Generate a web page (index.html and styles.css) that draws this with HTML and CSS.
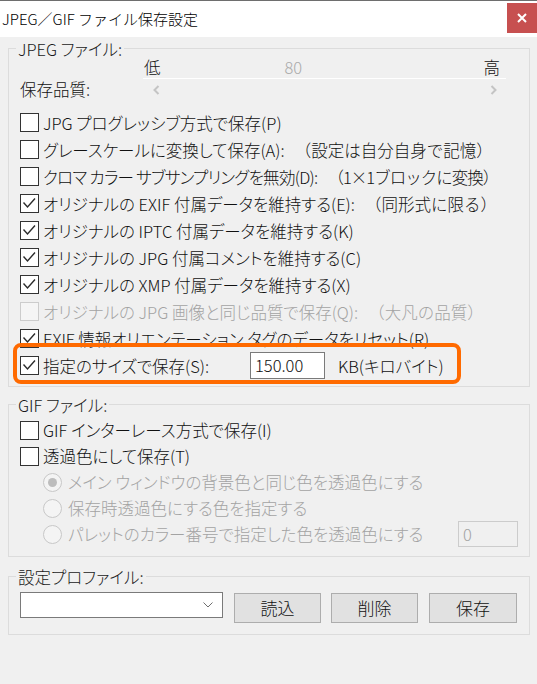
FILE: index.html
```html
<!DOCTYPE html>
<html lang="ja">
<head>
<meta charset="utf-8">
<title>JPEG／GIF ファイル保存設定</title>
<link rel="stylesheet" href="styles.css">
</head>
<body>
<div class="titlebar">
  <div class="title">JPEG／GIF ファイル保存設定</div>
  <div class="close">
    <svg width="10" height="10" viewBox="0 0 10 10"><path d="M1 1L9 9M9 1L1 9" stroke="#fff" stroke-width="2"/></svg>
  </div>
</div>
<div class="content">
  <section class="group g-jpeg">
    <div class="legend">JPEG ファイル:</div>
    <div class="quality">
      <div class="q-label">保存品質:</div>
      <div class="q-slider">
        <div class="ticks"><span class="lo">低</span><span class="val">80</span><span class="hi">高</span></div>
        <div class="track">
          <svg width="7" height="10" viewBox="0 0 7 10"><path d="M5.5 1L1.5 5L5.5 9" stroke="#c4c4c4" stroke-width="2" fill="none"/></svg>
          <svg width="7" height="10" viewBox="0 0 7 10"><path d="M1.5 1L5.5 5L1.5 9" stroke="#c4c4c4" stroke-width="2" fill="none"/></svg>
        </div>
      </div>
    </div>
    <div class="rows">
      <div class="row"><span class="cb"></span><span class="lbl">JPG プログレッシブ方式で保存(P)</span></div>
      <div class="row"><span class="cb"></span><span class="lbl">グレースケールに変換して保存(A):</span><span class="note">（設定は自分自身で記憶）</span></div>
      <div class="row"><span class="cb"></span><span class="lbl narrow">クロマ カラー サブサンプリングを無効(D):</span><span class="note narrow-note">（1×1ブロックに変換）</span></div>
      <div class="row"><span class="cb on"><svg width="17" height="17" viewBox="0 0 17 17"><polyline points="2.5,7.5 6.5,12 14,3.5" fill="none" stroke="#2b2b2b" stroke-width="1.4"/></svg></span><span class="lbl">オリジナルの EXIF 付属データを維持する(E):</span><span class="note">（同形式に限る）</span></div>
      <div class="row"><span class="cb on"><svg width="17" height="17" viewBox="0 0 17 17"><polyline points="2.5,7.5 6.5,12 14,3.5" fill="none" stroke="#2b2b2b" stroke-width="1.4"/></svg></span><span class="lbl">オリジナルの IPTC 付属データを維持する(K)</span></div>
      <div class="row"><span class="cb on"><svg width="17" height="17" viewBox="0 0 17 17"><polyline points="2.5,7.5 6.5,12 14,3.5" fill="none" stroke="#2b2b2b" stroke-width="1.4"/></svg></span><span class="lbl">オリジナルの JPG 付属コメントを維持する(C)</span></div>
      <div class="row"><span class="cb on"><svg width="17" height="17" viewBox="0 0 17 17"><polyline points="2.5,7.5 6.5,12 14,3.5" fill="none" stroke="#2b2b2b" stroke-width="1.4"/></svg></span><span class="lbl">オリジナルの XMP 付属データを維持する(X)</span></div>
      <div class="row disabled"><span class="cb"></span><span class="lbl">オリジナルの JPG 画像と同じ品質で保存(Q):</span><span class="note">（大凡の品質）</span></div>
      <div class="row"><span class="cb on"><svg width="17" height="17" viewBox="0 0 17 17"><polyline points="2.5,7.5 6.5,12 14,3.5" fill="none" stroke="#2b2b2b" stroke-width="1.4"/></svg></span><span class="lbl">EXIF 情報オリエンテーション タグのデータをリセット(R)</span></div>
      <div class="row row-size"><span class="cb on"><svg width="17" height="17" viewBox="0 0 17 17"><polyline points="2.5,7.5 6.5,12 14,3.5" fill="none" stroke="#2b2b2b" stroke-width="1.4"/></svg></span><span class="lbl size-lbl">指定のサイズで保存(S):</span><span class="num">150.00</span><span class="kb">KB(キロバイト)</span><span class="hl"></span></div>
    </div>
  </section>

  <section class="group g-gif">
    <div class="legend">GIF ファイル:</div>
    <div class="rows">
      <div class="row r26"><span class="cb"></span><span class="lbl">GIF インターレース方式で保存(I)</span></div>
      <div class="row r26"><span class="cb"></span><span class="lbl">透過色にして保存(T)</span></div>
      <div class="row r26 radio-row disabled"><span class="rb sel"><span class="dot"></span></span><span class="lbl">メイン ウィンドウの背景色と同じ色を透過色にする</span></div>
      <div class="row r26 radio-row disabled"><span class="rb"></span><span class="lbl">保存時透過色にする色を指定する</span></div>
      <div class="row r26 radio-row disabled"><span class="rb"></span><span class="lbl">パレットのカラー番号で指定した色を透過色にする</span><span class="num num-off">0</span></div>
    </div>
  </section>

  <section class="group g-prof">
    <div class="legend">設定プロファイル:</div>
    <div class="controls">
      <div class="select">
        <svg width="10" height="6" viewBox="0 0 10 6"><polyline points="0.5,0.5 5,5 9.5,0.5" fill="none" stroke="#6e6e6e" stroke-width="1"/></svg>
      </div>
      <div class="btn b1">読込</div>
      <div class="btn b2">削除</div>
      <div class="btn b3">保存</div>
    </div>
  </section>
</div>
</body>
</html>
```
FILE: styles.css
```css
html, body {
  margin: 0;
  padding: 0;
}
body {
  width: 537px;
  height: 684px;
  overflow: hidden;
  background: #f0f0f0;
  font-family: "Noto Sans CJK JP", "Noto Sans", sans-serif;
  font-size: 16.5px;
  font-weight: 300;
  font-feature-settings: "palt";
  color: #111;
}

/* title bar */
.titlebar {
  display: flex;
  align-items: flex-start;
  height: 36px;
  background: #fff;
  border-top: 1px solid #6e6e6e;
}
.title {
  padding-left: 2px;
  line-height: 36px;
  font-size: 15px;
  font-feature-settings: normal;
  color: #000;
}
.close {
  margin-left: auto;
  margin-top: 2px;
  width: 30px;
  height: 30px;
  background: #c75050;
  display: flex;
  align-items: center;
  justify-content: center;
}

/* content */
.content {
  padding: 11px 7px 0 8px;
}
.group {
  border: 1px solid #dcdcdc;
}
.legend {
  width: fit-content;
  height: 20px;
  line-height: 20px;
  margin: -10px 0 0 7px;
  padding: 0 2px;
  background: #f0f0f0;
  color: #1a1a1a;
}
.g-gif { margin-top: 17px; }
.g-prof { margin-top: 19px; }

/* quality slider */
.quality {
  display: flex;
}
.q-label {
  width: 134px;
  box-sizing: border-box;
  padding-left: 11px;
  align-self: flex-end;
  line-height: 20px;
  margin-bottom: 2px;
}
.q-slider {
  width: 363px;
}
.ticks {
  display: flex;
  height: 19px;
  line-height: 16px;
  border-bottom: 1px solid #fff;
}
.lo { margin-left: 1px; }
.val { margin-left: 124px; color: #ababab; }
.hi { margin-left: auto; margin-right: 6px; }
.track {
  height: 22px;
  display: flex;
  align-items: center;
  justify-content: space-between;
  padding: 0 9px 0 10px;
}

/* rows */
.g-jpeg .rows {
  margin-top: 8px;
  padding-bottom: 7px;
}
.g-gif .rows {
  margin-top: 2px;
  padding-bottom: 9px;
}
.row {
  display: flex;
  align-items: center;
  height: 27px;
  padding-left: 11px;
}
.r26 { height: 26px; }
.cb {
  flex: none;
  width: 19px;
  height: 19px;
  box-sizing: border-box;
  border: 1px solid #333;
  background: #fff;
  margin-right: 4px;
  display: flex;
}
.lbl {
  white-space: nowrap;
  line-height: 20px;
}
.narrow { letter-spacing: -0.7px; }
.note {
  white-space: nowrap;
  line-height: 20px;
  margin-left: 10px;
  font-feature-settings: normal;
}
.narrow-note { letter-spacing: -1px; }
.disabled { color: #a3a3a3; }
.disabled .cb {
  border-color: #cccccc;
  background: #f5f5f5;
}

/* size row */
.row-size { position: relative; }
.size-lbl {
  width: 207px;
}
.num {
  flex: none;
  width: 75px;
  height: 27px;
  box-sizing: border-box;
  border: 1px solid #7a7a7a;
  background: #fff;
  padding-left: 4px;
  line-height: 25px;
}
.kb {
  margin-left: 13px;
  white-space: nowrap;
  line-height: 20px;
}
.hl {
  position: absolute;
  left: 4px;
  top: -9px;
  width: 448px;
  height: 41px;
  box-sizing: border-box;
  border: 4px solid #ff6a00;
  border-radius: 8px;
  pointer-events: none;
}

/* radios */
.radio-row { padding-left: 34px; }
.rb {
  flex: none;
  width: 19px;
  height: 19px;
  box-sizing: border-box;
  border: 1px solid #c8c8c8;
  border-radius: 50%;
  background: #f4f4f4;
  margin-right: 6px;
  display: flex;
  align-items: center;
  justify-content: center;
}
.dot {
  width: 9px;
  height: 9px;
  border-radius: 50%;
  background: #bdbdbd;
}
.num-off {
  margin-left: auto;
  margin-right: 11px;
  width: 60px;
  height: 26px;
  border-color: #cccccc;
  background: #f0f0f0;
  color: #a3a3a3;
  line-height: 24px;
}

/* profile */
.controls {
  display: flex;
  align-items: flex-start;
  margin-top: 5px;
  padding: 0 0 11px 11px;
}
.select {
  width: 203px;
  height: 26px;
  box-sizing: border-box;
  border: 1px solid #7a7a7a;
  background: #fff;
  display: flex;
  align-items: center;
  justify-content: flex-end;
  padding-right: 9px;
}
.btn {
  margin-top: 1px;
  width: 87px;
  height: 30px;
  box-sizing: border-box;
  border: 1px solid #adadad;
  background: #e1e1e1;
  text-align: center;
  line-height: 28px;
  font-size: 17px;
}
.b1 { margin-left: 11px; }
.b2 { margin-left: 10px; }
.b3 { margin-left: 11px; width: 88px; }
```
